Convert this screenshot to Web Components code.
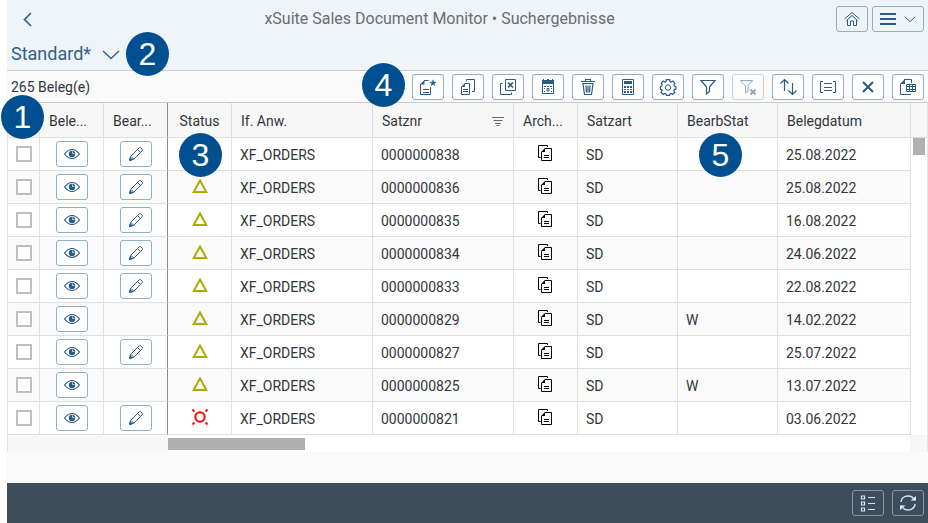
<!DOCTYPE html>
<html lang="de">
<head>
<meta charset="utf-8">
<meta name="viewport" content="width=device-width, initial-scale=1">
<title>xSuite Sales Document Monitor</title>
<style>
body {
    margin: 0;
    background: #fff;
    color: #32363a;
    font: 14px/20px Roboto, "Noto Sans", sans-serif;
}
</style>
</head>
<body>
<monitor-page></monitor-page>

<script>
// Icons on a 16 x 16 grid, stroked with the current colour
const ICONS = {
    back: '<path d="M12 2 5.500 8.500 12 15" stroke-width="1.700"/>',
    down: '<path d="m1 5 7 6.500L15 5" stroke-width="1.300"/>',
    downWide: '<path d="m0 5 8 7.500L16 5" stroke-width="1.400"/>',
    home: '<path d="m.5 8 7.500-6.500L15.500 8M2.500 9.500 8 4.500l5.500 5M3.500 9v5.500h3V10h3v4.500h3V9"/>',
    menu: '<path d="M0 3h16M0 8h16M0 13h16" stroke-width="2"/>',
    create: '<path d="M4 1.500h4.500M.5 5v10.500h10V8M3 10.500h6M3 13.500h6"/><path d="M0 5.500 4.500 1v4.500Z M13 .2l.9 2.600 2.600.1-2 1.600.7 2.600-2.200-1.500-2.200 1.500.7-2.600-2-1.600 2.600-.1Z" class="fill"/>',
    copy: '<path d="M5 4.500h4.500v11h-8V8M6.500 2V.5h8v12H12M3 10.500h5M3 12.500h5"/><path d="M1 8 5 4v4Z" class="fill"/>',
    reject: '<path d="M5.500.5h10v11h-10ZM2.500 4.500h-2v11h11V13.500"/><path d="m8 3.500 5 5m0-5-5 5" stroke-width="1.700"/>',
    calendar: '<path d="M2.500 2.500h11v12h-11Z"/><path d="M2 1h1V0h1v1h3V0h2v1h3V0h1v1h1v4H2Z" class="fill"/><path d="M4 7.500h2m1 0h2m1 0h2M4 9.500h1m6 0h1M4 12.500h1m6 0h1"/><path d="M7 9.500h2v2.500H7Z"/>',
    trash: '<path d="M1 2.500h14M5.500 2V.5h5V2M2.500 4.500h11M3 5l1.500 10.500h7L13 5M6 6.500l.5 7M8 6.500v7M10 6.500l-.5 7" stroke-width="1.200"/>',
    calculator: '<path d="M2.500.5h11v15h-11Z"/><path d="M4 2h8v3H4ZM4 7h2v2H4Zm3 0h2v2H7Zm3 0h2v2h-2ZM4 10h2v1H4Zm3 0h2v1H7Zm3 0h2v1h-2ZM4 12h2v2H4Zm3 0h2v2H7Zm3 0h2v2h-2Z" class="fill"/>',
    settings: '<path d="M6.300.600h3.400l.3 2 1 .5 1.800-1 2.100 2.200-1 1.700.4 1 1.600.4v2.800l-1.700.4-.4 1 1 1.800-2.100 2.100-1.800-1-1 .4-.4 1.500H6.400l-.4-1.500-1-.4-1.700 1-2.200-2.100 1-1.800-.4-1-1.300-.4V7.400l1.400-.4.4-1-1-1.700 2.100-2.200 1.800 1 1-.5Z" stroke-width="1.200"/><circle cx="8" cy="8.500" r="2.700"/>',
    filter: '<path d="M1 1.500h14L9.500 8v4.500l-3 2.500V8Z" stroke-width="1.200"/>',
    filterOff: '<path d="M.5 1.500h12L8 7v5.500L5.500 14V7Z"/><path d="m10.500 10.500 5 5m0-5-5 5" stroke-width="2"/>',
    sort: '<path d="M4.500 12V1M.5 4.500l4-4 4 4M12.500 4v11M8.500 11.500l4 4 4-4" stroke-width="1.200"/>',
    group: '<path d="M3 2.500H.5v11H3M13 2.500h2.500v11H13M4 4.500h8M4 8.500h8M4 11.500h8"/>',
    close: '<path d="m3 3 10 10M13 3 3 13" stroke-width="2"/>',
    exportTable: '<path d="M4 .5h7.500V4M.5 5v10.500H11M6.500 5.500h9v7h-9ZM6.500 7.500h9M6.500 10.500h9M9.500 5.500v7M12.500 5.500v7"/><path d="M0 5 5 0v5Z" class="fill"/>',
    eye: '<path d="M.5 8Q4 3.500 8 3.500T15.500 8Q12 12.500 8 12.500T.5 8Z" stroke-width="1.200"/><circle cx="8" cy="8" r="3.200" class="fill"/><path d="M8.500 5.500v2h2" stroke="#fff" stroke-width=".7"/>',
    edit: '<path d="m1.500 14.500 1.200-4.200 8.500-8.500q.8-.8 1.600 0l1.400 1.400q.8.800 0 1.600l-8.500 8.500ZM9.500 3.500l3 3M3 10.500l3 3"/><path d="m1 15 1-4L5 14Z" class="fill"/>',
    sorted: '<path d="M2 4.500h12M3.500 7.500h9M5 10.500h6M6.500 12.500h3"/>',
    archive: '<path d="M2.500 12.500h-2V.5h9V2M7 3.500h6.500v12h-10V7M6 10.500h5M6 12.500h5"/><path d="M3 7 7 3v4Z" class="fill"/>',
    warning: '<path d="M8 2.500 14.300 14H1.700Z" stroke-width="2"/>',
    error: '<circle cx="8" cy="8" r="4.700" stroke-width="2"/><path d="m.5.5 2 2m11 11 2 2m0-15-2 2m-11 11-2 2" stroke-width="1.800"/>',
    list: '<path d="M1.500 1h3v3h-3ZM1.500 7h3v3h-3ZM1.500 13h3v3h-3ZM8 2.500h7M8 8.500h7M8 14.500h7" stroke-width="1.200"/>',
    refresh: '<path d="M.8 7Q2 1 8 1q5 0 6.500 4.500M15.200 9Q14 15 8 15q-5 0-6.500-4.500" stroke-width="1.300"/><path d="M10.500 5.500H16V1ZM5.500 10.500H0V15Z" class="fill"/>'
};

class UiIcon extends HTMLElement {
    connectedCallback() {
        const shadowRoot = this.attachShadow({ mode: "open" });
        shadowRoot.innerHTML = `
<style>
:host { display: inline-block; width: 16px; height: 16px; flex: none; }
svg { display: block; width: 100%; height: 100%; overflow: visible; fill: none; stroke: currentColor; }
.fill { fill: currentColor; stroke: none; }
</style>
<svg viewBox="0 0 16 16" aria-hidden="true">${ICONS[this.getAttribute("name")]}</svg>`;
    }
}
customElements.define("ui-icon", UiIcon);

class IconButton extends HTMLElement {
    connectedCallback() {
        const shadowRoot = this.attachShadow({ mode: "open" });
        shadowRoot.innerHTML = `
<style>
:host { display: inline-flex; flex: none; color: #2b5a83; }
button {
    display: flex;
    align-items: center;
    justify-content: center;
    gap: 8px;
    box-sizing: border-box;
    min-width: 32px;
    height: 26px;
    padding: 0 7px;
    border: 1px solid var(--button-border, #91afc6);
    border-radius: 3px;
    background: var(--button-background, #fff);
    color: inherit;
    font: inherit;
}
button:disabled { opacity: .5; }
</style>
<button type="button" aria-label="${this.getAttribute("label")}" ${this.hasAttribute("disabled") ? "disabled" : ""}>
    <ui-icon name="${this.getAttribute("icon")}"></ui-icon><slot></slot>
</button>`;
    }
}
customElements.define("icon-button", IconButton);

// Numbered marker that floats above its parent
class StepMarker extends HTMLElement {
    connectedCallback() {
        const shadowRoot = this.attachShadow({ mode: "open" });
        shadowRoot.innerHTML = `
<style>
:host {
    position: absolute;
    z-index: 2;
    display: grid;
    place-items: center;
    width: 43px;
    height: 44px;
    border-radius: 50%;
    background: #004f91;
    color: #fff;
    font: 32px/44px "Liberation Sans", Arial, sans-serif;
}
</style>
<slot></slot>`;
    }
}
customElements.define("step-marker", StepMarker);

class MonitorHeader extends HTMLElement {
    connectedCallback() {
        const shadowRoot = this.attachShadow({ mode: "open" });
        shadowRoot.innerHTML = `
<style>
:host { display: block; background: #eff4f9; border-bottom: 1px solid #ccc; --button-background: transparent; }
.bar { display: grid; grid-template-columns: auto 1fr auto; align-items: center; height: 38px; padding: 0 4px; }
h1 { margin: 0; color: #6a6d70; font-size: 16px; font-weight: 400; text-align: center; }
.back { display: flex; padding: 0 8px; border: 0; background: none; color: #346187; }
.actions { display: flex; gap: 4px; }
.variant { display: flex; align-items: center; height: 32px; padding: 0 4px; }
.variant button {
    position: relative;
    display: flex;
    align-items: center;
    gap: 12px;
    padding: 0;
    border: 0;
    background: none;
    color: #346187;
    font: 18px/26px Roboto, sans-serif;
}
step-marker { left: 115px; top: -9px; }
</style>
<div class="bar">
    <button class="back" type="button" aria-label="Zurück"><ui-icon name="back"></ui-icon></button>
    <h1>xSuite Sales Document Monitor • Suchergebnisse</h1>
    <div class="actions">
        <icon-button icon="home" label="Startseite"></icon-button>
        <icon-button icon="menu" label="Menü"><ui-icon name="down" style="width:12px"></ui-icon></icon-button>
    </div>
</div>
<div class="variant">
    <button type="button">Standard*<ui-icon name="downWide"></ui-icon><step-marker>2</step-marker></button>
</div>`;
    }
}
customElements.define("monitor-header", MonitorHeader);

const TOOLS = [
    ["create", "Anlegen"], ["copy", "Kopieren"], ["reject", "Ablehnen"], ["calendar", "Termin"],
    ["trash", "Löschen"], ["calculator", "Berechnen"], ["settings", "Einstellungen"],
    ["filter", "Filtern"], ["filterOff", "Filter entfernen"], ["sort", "Sortieren"],
    ["group", "Gruppieren"], ["close", "Schließen"], ["exportTable", "Exportieren"]
];

class MonitorToolbar extends HTMLElement {
    connectedCallback() {
        const shadowRoot = this.attachShadow({ mode: "open" });
        shadowRoot.innerHTML = `
<style>
:host {
    display: flex;
    align-items: center;
    justify-content: space-between;
    height: 30px;
    padding: 1px 4px 0;
    background: #fafafa;
    border-bottom: 1px solid #ccc;
}
h2 { margin: 0; font-size: 14px; font-weight: 400; }
.tools { position: relative; display: flex; gap: 8px; }
step-marker { right: calc(100% + 7px); top: -11px; }
</style>
<h2>265 Beleg(e)</h2>
<div class="tools">
    <step-marker>4</step-marker>
    ${TOOLS.map(([icon, label]) => `<icon-button icon="${icon}" label="${label}" ${icon === "filterOff" ? "disabled" : ""}></icon-button>`).join("")}
</div>`;
    }
}
customElements.define("monitor-toolbar", MonitorToolbar);

// number, date, editable, processing state, status
const ROWS = [
    ["0000000838", "25.08.2022", true, "", "warning"],
    ["0000000836", "25.08.2022", true, "", "warning"],
    ["0000000835", "16.08.2022", true, "", "warning"],
    ["0000000834", "24.06.2022", true, "", "warning"],
    ["0000000833", "22.08.2022", true, "", "warning"],
    ["0000000829", "14.02.2022", false, "W", "warning"],
    ["0000000827", "25.07.2022", true, "", "warning"],
    ["0000000825", "13.07.2022", false, "W", "warning"],
    ["0000000821", "03.06.2022", true, "", "error"]
];

class MonitorTable extends HTMLElement {
    connectedCallback() {
        const shadowRoot = this.attachShadow({ mode: "open" });
        shadowRoot.innerHTML = `
<style>
:host { position: relative; display: grid; grid-template-columns: 1fr 17px; border-left: 1px solid #e0e0e0; }
table { width: 100%; table-layout: fixed; border-collapse: separate; border-spacing: 0; }
th, td {
    box-sizing: border-box;
    padding: 0 8px;
    border: solid #e0e0e0;
    border-width: 0 1px 1px 0;
    text-align: left;
    font-weight: 400;
    white-space: nowrap;
}
th { height: 35px; padding: 2px 9px 0; background: #f7f7f7; }
th.center { padding: 2px 0 0; text-align: center; }
td { height: 33px; padding-top: 2px; background: #fff; }
td.center { padding: 0; text-align: center; }
tr:nth-child(even) td { background: #fafafa; }
th.fixed, td.fixed { border-right-color: #8c8c8c; }
.head { display: flex; align-items: center; justify-content: space-between; }
.head ui-icon { color: #6a6d70; margin-right: -2px; }
icon-button { vertical-align: middle; }
td ui-icon { display: block; margin: 0 auto 2px; }
input {
    appearance: none;
    display: block;
    box-sizing: border-box;
    width: 16px;
    height: 16px;
    margin: 0 auto;
    border: 2px solid #bfbfbf;
    background: #fff;
}
.warning { color: #abab00; }
.error { color: #f00; }
.archive { color: #000; }
.vertical { border-right: 1px solid #e5e5e5; padding-top: 35px; background: linear-gradient(#f7f7f7 34px, #e0e0e0 34px 35px, #fff 35px); }
.vertical div { height: 17px; margin: 0 2px; background: #b0b0b0; }
.horizontal { display: flex; grid-column: 1 / 3; height: 17px; border-right: 1px solid #e5e5e5; background: #fff; }
.horizontal .locked { width: 160px; background: #f7f7f7; }
.horizontal .thumb { width: 137px; height: 12px; margin-top: 3px; background: #b0b0b0; }
.horizontal .corner { width: 17px; margin-left: auto; background: #f7f7f7; }
.one { left: -7px; top: -8px; }
.three { left: 171px; top: 30px; }
.five { left: 691px; top: 30px; }
</style>
<table>
    <colgroup>
        <col style="width:32px"><col style="width:64px"><col style="width:64px"><col style="width:64px">
        <col style="width:141px"><col style="width:141px"><col style="width:64px">
        <col style="width:100px"><col style="width:100px"><col>
    </colgroup>
    <thead>
        <tr>
            <th></th><th>Bele...</th><th class="fixed">Bear...</th><th class="center">Status</th>
            <th>If. Anw.</th><th><div class="head">Satznr<ui-icon name="sorted"></ui-icon></div></th>
            <th>Arch...</th><th>Satzart</th><th>BearbStat</th><th>Belegdatum</th>
        </tr>
    </thead>
    <tbody>
        ${ROWS.map(([number, date, editable, state, status]) => `
        <tr>
            <td class="center"><input type="checkbox" aria-label="Beleg ${number} auswählen"></td>
            <td class="center"><icon-button icon="eye" label="Beleg anzeigen"></icon-button></td>
            <td class="center fixed">${editable ? '<icon-button icon="edit" label="Beleg bearbeiten"></icon-button>' : ""}</td>
            <td class="center"><ui-icon class="${status}" name="${status}"></ui-icon></td>
            <td>XF_ORDERS</td><td>${number}</td>
            <td class="center"><ui-icon class="archive" name="archive"></ui-icon></td>
            <td>SD</td><td>${state}</td><td>${date}</td>
        </tr>`).join("")}
    </tbody>
</table>
<div class="vertical"><div></div></div>
<div class="horizontal"><div class="locked"></div><div class="thumb"></div><div class="corner"></div></div>
<step-marker class="one">1</step-marker>
<step-marker class="three">3</step-marker>
<step-marker class="five">5</step-marker>`;
    }
}
customElements.define("monitor-table", MonitorTable);

class MonitorFooter extends HTMLElement {
    connectedCallback() {
        const shadowRoot = this.attachShadow({ mode: "open" });
        shadowRoot.innerHTML = `
<style>
:host {
    display: flex;
    align-items: center;
    justify-content: flex-end;
    gap: 8px;
    height: 40px;
    padding: 0 4px;
    background: #3c4d5b;
    --button-background: transparent;
    --button-border: #8396a8;
}
icon-button { color: #d1e8ff; }
</style>
<icon-button icon="list" label="Protokoll"></icon-button>
<icon-button icon="refresh" label="Aktualisieren"></icon-button>`;
    }
}
customElements.define("monitor-footer", MonitorFooter);

class MonitorPage extends HTMLElement {
    connectedCallback() {
        const shadowRoot = this.attachShadow({ mode: "open" });
        shadowRoot.innerHTML = `
<style>
:host { display: flex; flex-direction: column; min-height: 100vh; margin-left: 7px; background: #fafafa; }
monitor-footer { margin-top: auto; }
</style>
<monitor-header></monitor-header>
<monitor-toolbar></monitor-toolbar>
<monitor-table></monitor-table>
<monitor-footer></monitor-footer>`;
    }
}
customElements.define("monitor-page", MonitorPage);
</script>
</body>
</html>
